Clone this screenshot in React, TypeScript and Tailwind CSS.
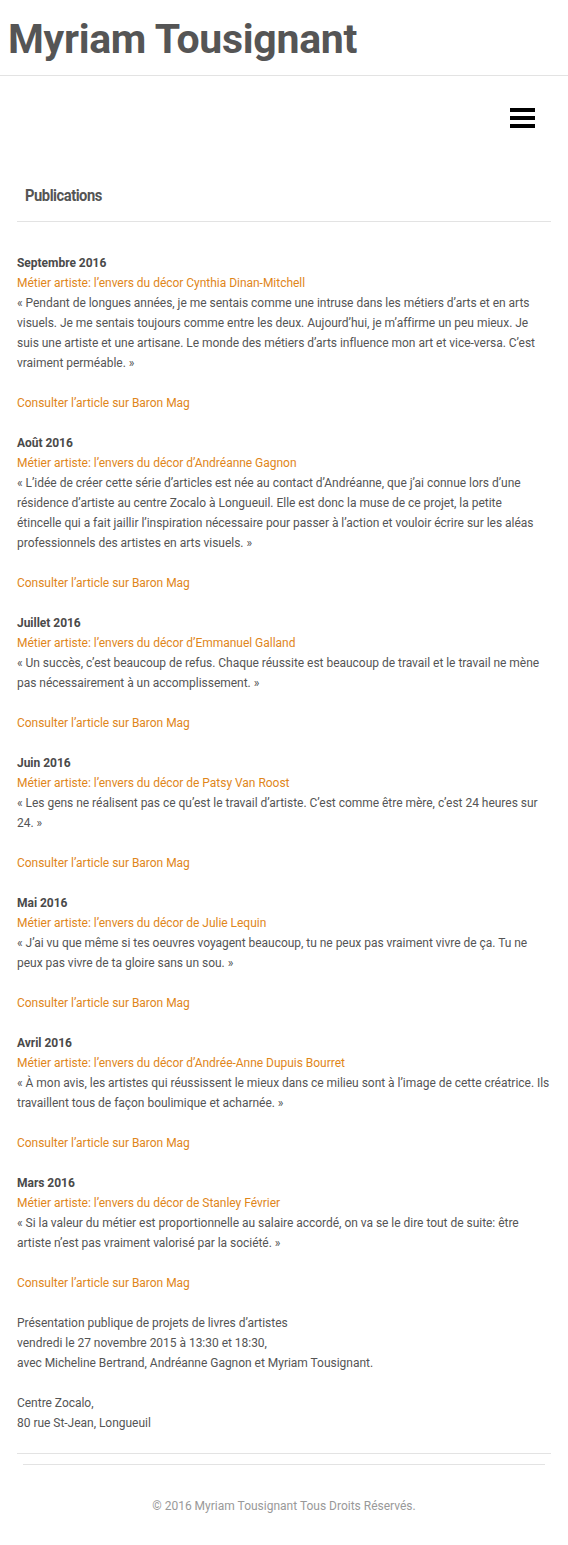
import type { ReactNode } from "react"

const articles: { date: string; title: string; quote: ReactNode }[] = [
  {
    date: "Septembre 2016",
    title: "Métier artiste: l’envers du décor Cynthia Dinan-Mitchell",
    quote:
      "« Pendant de longues années, je me sentais comme une intruse dans les métiers d’arts et en arts visuels. Je me sentais toujours comme entre les deux. Aujourd’hui, je m’affirme un peu mieux. Je suis une artiste et une artisane. Le monde des métiers d’arts influence mon art et vice-versa. C’est vraiment perméable. »",
  },
  {
    date: "Août 2016",
    title: "Métier artiste: l’envers du décor d’Andréanne Gagnon",
    quote: (
      <>
        « L’idée de créer cette série d’articles est née au contact d’Andréanne, que j’ai connue lors d’une résidence
        d’artiste au centre Zocalo à Longueuil. Elle est donc la muse de ce projet, la petite
        <br />
        étincelle qui a fait jaillir l’inspiration nécessaire pour passer à l’action et vouloir écrire sur les aléas
        professionnels des artistes en arts visuels. »
      </>
    ),
  },
  {
    date: "Juillet 2016",
    title: "Métier artiste: l’envers du décor d’Emmanuel Galland",
    quote:
      "« Un succès, c’est beaucoup de refus. Chaque réussite est beaucoup de travail et le travail ne mène pas nécessairement à un accomplissement. »",
  },
  {
    date: "Juin 2016",
    title: "Métier artiste: l’envers du décor de Patsy Van Roost",
    quote:
      "« Les gens ne réalisent pas ce qu’est le travail d’artiste. C’est comme être mère, c’est 24 heures sur 24. »",
  },
  {
    date: "Mai 2016",
    title: "Métier artiste: l’envers du décor de Julie Lequin",
    quote:
      "« J’ai vu que même si tes oeuvres voyagent beaucoup, tu ne peux pas vraiment vivre de ça. Tu ne peux pas vivre de ta gloire sans un sou. »",
  },
  {
    date: "Avril 2016",
    title: "Métier artiste: l’envers du décor d’Andrée-Anne Dupuis Bourret",
    quote:
      "« À mon avis, les artistes qui réussissent le mieux dans ce milieu sont à l’image de cette créatrice. Ils travaillent tous de façon boulimique et acharnée. »",
  },
  {
    date: "Mars 2016",
    title: "Métier artiste: l’envers du décor de Stanley Février",
    quote:
      "« Si la valeur du métier est proportionnelle au salaire accordé, on va se le dire tout de suite: être artiste n’est pas vraiment valorisé par la société. »",
  },
]

export default function App() {
  return (
    <div className="min-h-screen bg-white text-[#555] font-['Roboto','Liberation_Sans',sans-serif]">
      {/* en-tête */}
      <header className="border-b border-[#e3e3e3] h-[76px] px-2 pt-[14px]">
        <h1 className="text-[41px] leading-[50px] font-bold text-[#555] tracking-[-0.3px]">Myriam Tousignant</h1>
      </header>

      <nav className="flex justify-end pr-[33px] pt-[32px] h-[110px]">
        <button className="flex flex-col gap-1 w-[25px]">
          <span className="block h-1 w-full bg-black" />
          <span className="block h-1 w-full bg-black" />
          <span className="block h-1 w-full bg-black" />
        </button>
      </nav>

      <main className="px-[17px]">
        <div className="border-b border-[#e3e3e3] pb-[15px] pl-2">
          <h2 className="text-[16px] leading-[20px] font-bold text-[#555] tracking-[-0.5px] scale-x-[0.92] origin-left">
            Publications
          </h2>
        </div>

        <div className="pt-[31px] pb-[20px] text-[12px] leading-[20px] tracking-[-0.025px]">
          {articles.map((a) => (
            <div key={a.date} className="mb-5">
              <p className="font-bold text-[#4a4a4a]">{a.date}</p>
              <a className="block text-[#e0861a]">{a.title}</a>
              <p>{a.quote}</p>
              <p className="mt-5">
                <a className="text-[#e0861a]">Consulter l’article sur Baron Mag</a>
              </p>
            </div>
          ))}
          <p>
            Présentation publique de projets de livres d’artistes
            <br />
            vendredi le 27 novembre 2015 à 13:30 et 18:30,
            <br />
            avec Micheline Bertrand, Andréanne Gagnon et Myriam Tousignant.
          </p>
          <p className="mt-5">
            Centre Zocalo,
            <br />
            80 rue St-Jean, Longueuil
          </p>
        </div>

        <div className="border-t border-[#e3e3e3]" />
      </main>

      <footer className="mx-[23px] mt-[10px] border-t border-[#e3e3e3] pt-[31px] pb-[34px] text-center text-[12px] leading-[20px] text-[#999]">
        © 2016 Myriam Tousignant Tous Droits Réservés.
      </footer>
    </div>
  )
}
